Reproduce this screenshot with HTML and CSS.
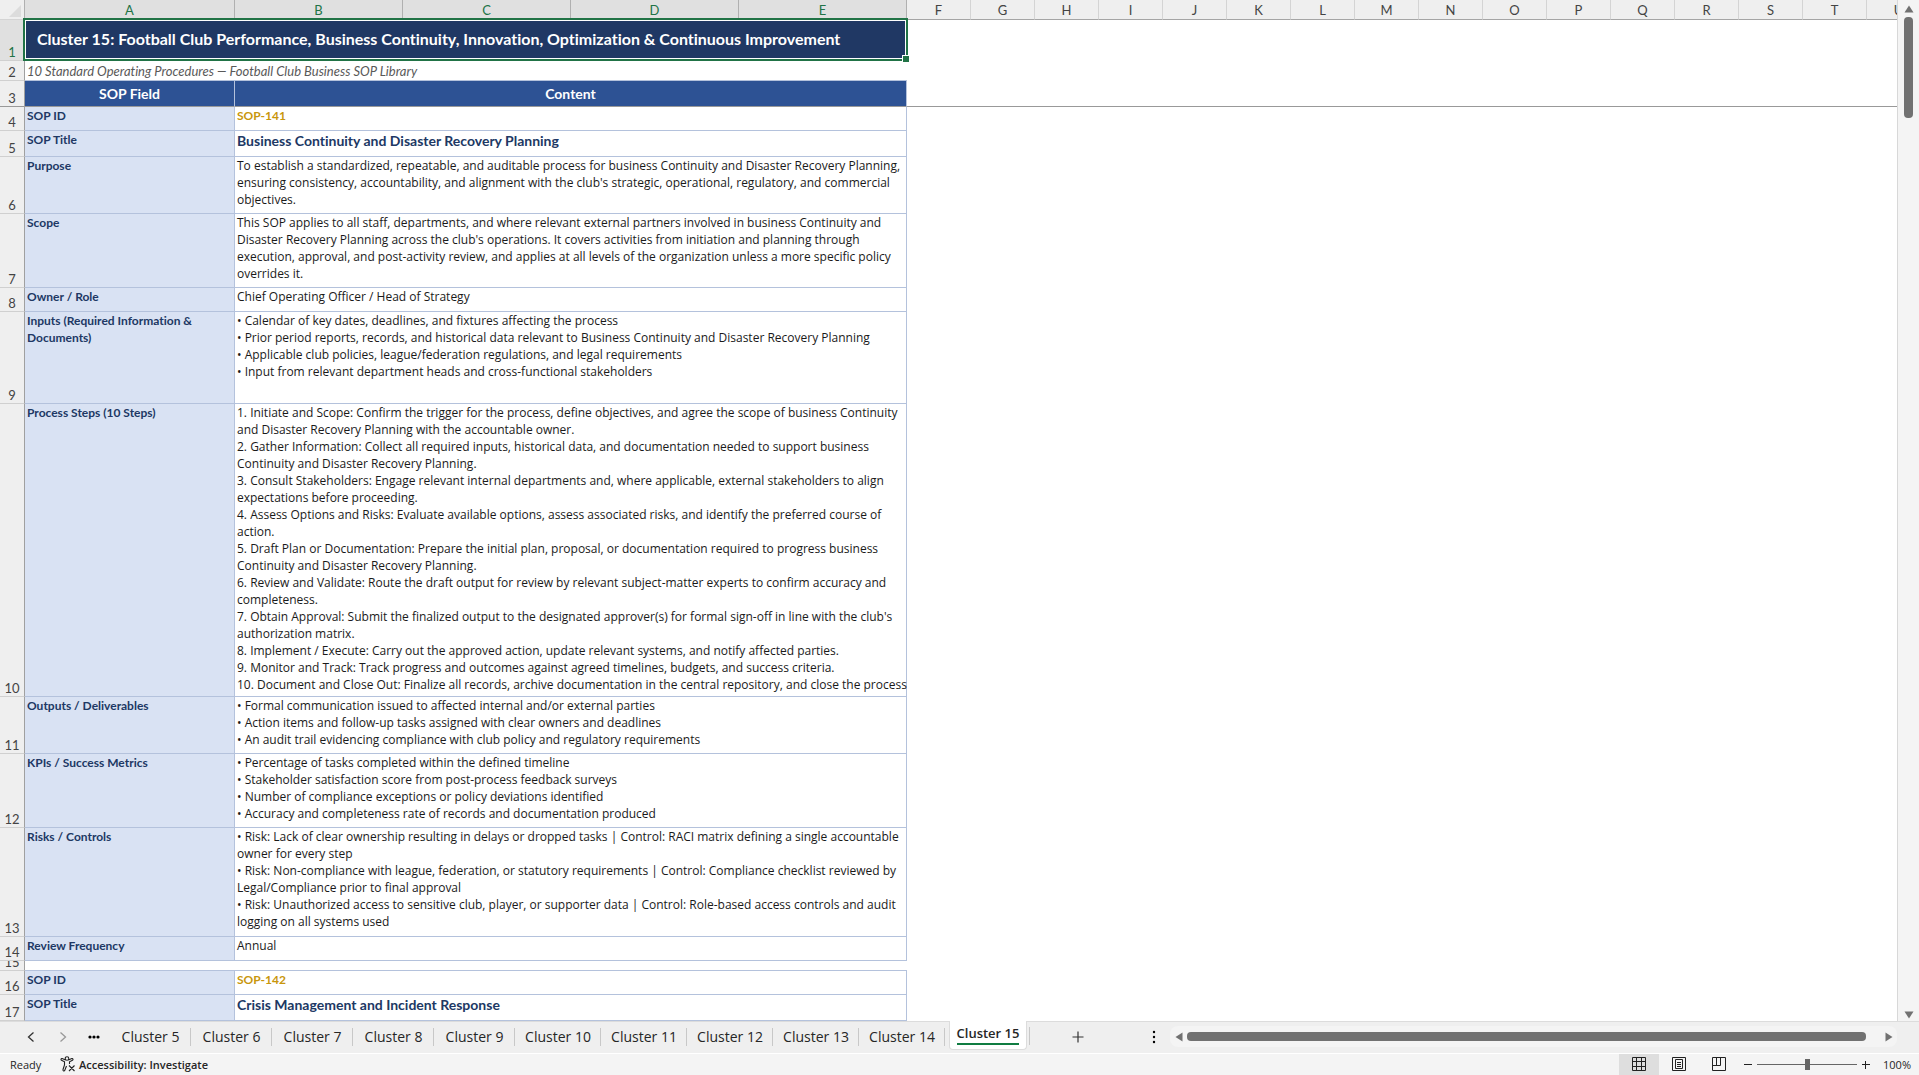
FILE: index.html
```html
<!DOCTYPE html>
<html lang="en">
<head>
<meta charset="UTF-8">
<meta name="viewport" content="width=device-width, initial-scale=1.0">
<title>Football Club SOP Library</title>
<link rel="stylesheet" href="styles.css">
</head>
<body>
<main class="workspace">
  <div class="sheet">
    <table class="grid">
      <colgroup>
        <col class="col-num"><col class="col-field"><col class="col-content" span="4"><col class="col-std" span="16">
      </colgroup>
      <thead>
        <tr class="letters">
          <th class="corner"><svg width="12" height="12" viewBox="0 0 12 12"><path d="M12 0v12H0z" fill="#dcdcdc"/></svg></th>
          <th class="on">A</th><th class="on">B</th><th class="on">C</th><th class="on">D</th><th class="on">E</th>
          <th>F</th><th>G</th><th>H</th><th>I</th><th>J</th><th>K</th><th>L</th><th>M</th>
          <th>N</th><th>O</th><th>P</th><th>Q</th><th>R</th><th>S</th><th>T</th><th>U</th>
        </tr>
      </thead>
      <tbody>
        <tr class="row-title">
          <th class="num on">1</th>
          <td class="title" colspan="5">Cluster 15: Football Club Performance, Business Continuity, Innovation, Optimization &amp; Continuous Improvement<span class="selection"></span></td>
          <td colspan="16"></td>
        </tr>
        <tr class="row-sub">
          <th class="num">2</th>
          <td class="subtitle" colspan="5">10 Standard Operating Procedures — Football Club Business SOP Library</td>
          <td colspan="16"></td>
        </tr>
        <tr class="row-head">
          <th class="num">3</th>
          <td class="head">SOP Field</td>
          <td class="head" colspan="4">Content</td>
          <td colspan="16"></td>
        </tr>
        <tr class="h24">
          <th class="num">4</th>
          <td class="field">SOP ID</td>
          <td class="content id" colspan="4">SOP-141</td>
        </tr>
        <tr class="h26">
          <th class="num">5</th>
          <td class="field">SOP Title</td>
          <td class="content name" colspan="4">Business Continuity and Disaster Recovery Planning</td>
        </tr>
        <tr class="h57">
          <th class="num">6</th>
          <td class="field">Purpose</td>
          <td class="content" colspan="4">To establish a standardized, repeatable, and auditable process for business Continuity and Disaster Recovery Planning,<br>
            ensuring consistency, accountability, and alignment with the club's strategic, operational, regulatory, and commercial<br>
            objectives.</td>
        </tr>
        <tr class="h74">
          <th class="num">7</th>
          <td class="field">Scope</td>
          <td class="content" colspan="4">This SOP applies to all staff, departments, and where relevant external partners involved in business Continuity and<br>
            Disaster Recovery Planning across the club's operations. It covers activities from initiation and planning through<br>
            execution, approval, and post-activity review, and applies at all levels of the organization unless a more specific policy<br>
            overrides it.</td>
        </tr>
        <tr class="h24">
          <th class="num">8</th>
          <td class="field">Owner / Role</td>
          <td class="content" colspan="4">Chief Operating Officer / Head of Strategy</td>
        </tr>
        <tr class="h92">
          <th class="num">9</th>
          <td class="field">Inputs (Required Information &amp;<br>Documents)</td>
          <td class="content" colspan="4">• Calendar of key dates, deadlines, and fixtures affecting the process<br>
            • Prior period reports, records, and historical data relevant to Business Continuity and Disaster Recovery Planning<br>
            • Applicable club policies, league/federation regulations, and legal requirements<br>
            • Input from relevant department heads and cross-functional stakeholders</td>
        </tr>
        <tr class="h293">
          <th class="num">10</th>
          <td class="field">Process Steps (10 Steps)</td>
          <td class="content" colspan="4">1. Initiate and Scope: Confirm the trigger for the process, define objectives, and agree the scope of business Continuity<br>
            and Disaster Recovery Planning with the accountable owner.<br>
            2. Gather Information: Collect all required inputs, historical data, and documentation needed to support business<br>
            Continuity and Disaster Recovery Planning.<br>
            3. Consult Stakeholders: Engage relevant internal departments and, where applicable, external stakeholders to align<br>
            expectations before proceeding.<br>
            4. Assess Options and Risks: Evaluate available options, assess associated risks, and identify the preferred course of<br>
            action.<br>
            5. Draft Plan or Documentation: Prepare the initial plan, proposal, or documentation required to progress business<br>
            Continuity and Disaster Recovery Planning.<br>
            6. Review and Validate: Route the draft output for review by relevant subject-matter experts to confirm accuracy and<br>
            completeness.<br>
            7. Obtain Approval: Submit the finalized output to the designated approver(s) for formal sign-off in line with the club's<br>
            authorization matrix.<br>
            8. Implement / Execute: Carry out the approved action, update relevant systems, and notify affected parties.<br>
            9. Monitor and Track: Track progress and outcomes against agreed timelines, budgets, and success criteria.<br>
            10. Document and Close Out: Finalize all records, archive documentation in the central repository, and close the process</td>
        </tr>
        <tr class="h57">
          <th class="num">11</th>
          <td class="field">Outputs / Deliverables</td>
          <td class="content" colspan="4">• Formal communication issued to affected internal and/or external parties<br>
            • Action items and follow-up tasks assigned with clear owners and deadlines<br>
            • An audit trail evidencing compliance with club policy and regulatory requirements</td>
        </tr>
        <tr class="h74">
          <th class="num">12</th>
          <td class="field">KPIs / Success Metrics</td>
          <td class="content" colspan="4">• Percentage of tasks completed within the defined timeline<br>
            • Stakeholder satisfaction score from post-process feedback surveys<br>
            • Number of compliance exceptions or policy deviations identified<br>
            • Accuracy and completeness rate of records and documentation produced</td>
        </tr>
        <tr class="h109">
          <th class="num">13</th>
          <td class="field">Risks / Controls</td>
          <td class="content" colspan="4">• Risk: Lack of clear ownership resulting in delays or dropped tasks | Control: RACI matrix defining a single accountable<br>
            owner for every step<br>
            • Risk: Non-compliance with league, federation, or statutory requirements | Control: Compliance checklist reviewed by<br>
            Legal/Compliance prior to final approval<br>
            • Risk: Unauthorized access to sensitive club, player, or supporter data | Control: Role-based access controls and audit<br>
            logging on all systems used</td>
        </tr>
        <tr class="h24">
          <th class="num">14</th>
          <td class="field">Review Frequency</td>
          <td class="content" colspan="4">Annual</td>
        </tr>
        <tr class="spacer">
          <th class="num"><div class="clip">15</div></th>
          <td class="gap" colspan="5"></td>
        </tr>
        <tr class="h24">
          <th class="num">16</th>
          <td class="field">SOP ID</td>
          <td class="content id" colspan="4">SOP-142</td>
        </tr>
        <tr class="h26">
          <th class="num">17</th>
          <td class="field">SOP Title</td>
          <td class="content name" colspan="4">Crisis Management and Incident Response</td>
        </tr>
      </tbody>
    </table>
  </div>
  <div class="vscroll">
    <button class="arrow" aria-label="Scroll up"><svg width="10" height="8" viewBox="0 0 10 8"><path d="M5 0.500L9.500 7.500H0.500z"/></svg></button>
    <div class="vtrack"><div class="vthumb"></div></div>
    <button class="arrow" aria-label="Scroll down"><svg width="10" height="8" viewBox="0 0 10 8"><path d="M5 7.500L0.500 0.500h9z"/></svg></button>
  </div>
</main>

<nav class="tabbar">
  <div class="tab-nav">
    <button aria-label="Previous sheet"><svg width="8" height="12" viewBox="0 0 8 12"><path d="M6.500 1.500L1.500 6L6.500 10.500" fill="none" stroke="#333" stroke-width="1.300"/></svg></button>
    <button aria-label="Next sheet"><svg width="8" height="12" viewBox="0 0 8 12"><path d="M1.500 1.500L6.500 6L1.500 10.500" fill="none" stroke="#999" stroke-width="1.300"/></svg></button>
    <button aria-label="More sheets"><svg width="12" height="4" viewBox="0 0 12 4"><circle cx="2" cy="2" r="1.600"/><circle cx="6" cy="2" r="1.600"/><circle cx="10" cy="2" r="1.600"/></svg></button>
  </div>
  <div class="tabs">
    <button class="tab">Cluster 5</button>
    <button class="tab">Cluster 6</button>
    <button class="tab">Cluster 7</button>
    <button class="tab">Cluster 8</button>
    <button class="tab">Cluster 9</button>
    <button class="tab wide">Cluster 10</button>
    <button class="tab wide">Cluster 11</button>
    <button class="tab wide">Cluster 12</button>
    <button class="tab wide">Cluster 13</button>
    <button class="tab wide">Cluster 14</button>
    <button class="tab active"><span>Cluster 15</span></button>
  </div>
  <button class="add" aria-label="New sheet"><svg width="12" height="12" viewBox="0 0 12 12"><path d="M6 0.500v11M0.500 6h11" stroke="#333" stroke-width="1.200"/></svg></button>
  <div class="hscroll-area">
    <span class="grip"><svg width="4" height="14" viewBox="0 0 4 14"><circle cx="2" cy="2" r="1.200"/><circle cx="2" cy="7" r="1.200"/><circle cx="2" cy="12" r="1.200"/></svg></span>
    <div class="hscroll">
      <button class="arrow" aria-label="Scroll left"><svg width="8" height="10" viewBox="0 0 8 10"><path d="M0.500 5l7-4.500v9z"/></svg></button>
      <div class="htrack"><div class="hthumb"></div></div>
      <button class="arrow" aria-label="Scroll right"><svg width="8" height="10" viewBox="0 0 8 10"><path d="M7.500 5l-7 4.500v-9z"/></svg></button>
    </div>
  </div>
</nav>

<footer class="statusbar">
  <span class="ready">Ready</span>
  <button class="access">
    <svg width="16" height="16" viewBox="0 0 16 16" fill="none" stroke="#222" stroke-width="1.100"><circle cx="7" cy="2.500" r="1.800"/><path d="M5.500 4L2.200 2.600C1 2.200 0.500 3.800 1.500 4.300L4.500 5.800V9L3 13.500C2.600 15 4.300 15.500 4.800 14.200L6.500 10M8.500 4l3.300-1.400c1.200-.4 1.700 1.200.7 1.700L9.500 5.800V8M9 9.500l5.500 5.500M14.500 9.500L9 15"/></svg>
    Accessibility: Investigate
  </button>
  <div class="views">
    <button class="view current" aria-label="Normal view"><svg width="14" height="14" viewBox="0 0 14 14"><path d="M.5 .5h13v13H.5zM4.500 .5v13M9.500 .5v13M.5 4.500h13M.5 9.500h13"/></svg></button>
    <button class="view" aria-label="Page layout"><svg width="14" height="14" viewBox="0 0 14 14"><path d="M.5 .5h13v13H.5zM3.500 2.500h7v9h-7zM5 5.500h4M5 7.500h4M5 9.500h4"/></svg></button>
    <button class="view" aria-label="Page break preview"><svg width="14" height="14" viewBox="0 0 14 14"><path d="M.5 .5h13v13H.5zM.5 8.500h8V.5M4.500 .5v8"/></svg></button>
  </div>
  <div class="zoom">
    <button aria-label="Zoom out"><svg width="8" height="8" viewBox="0 0 8 8"><path d="M0 3.500h8"/></svg></button>
    <input type="range" min="10" max="190" value="100" aria-label="Zoom">
    <button aria-label="Zoom in"><svg width="8" height="8" viewBox="0 0 8 8"><path d="M0 3.500h8M3.500 0v8"/></svg></button>
    <span class="percent">100%</span>
  </div>
</footer>
</body>
</html>
```
FILE: styles.css
```css
:root {
  --line: #b4c2dc;
  --navy: #203864;
  --green: #217346;
  --chrome: #efefef;
  --thumb: #717171;
}

* { box-sizing: border-box; }

body {
  margin: 0;
  height: 100vh;
  display: flex; flex-direction: column;
  font-family: Lato, "Liberation Sans", sans-serif;
  font-variant-ligatures: none;
  color: #1a1a1a; background: #fff;
  overflow: hidden;
}

button {
  margin: 0; padding: 0; border: none; background: none;
  font: inherit; color: inherit; cursor: pointer;
  display: flex; align-items: center; justify-content: center;
}

svg { display: block; }

.workspace {
  flex: 1; min-height: 0;
  display: flex;
}
.sheet {
  flex: 1; min-width: 0;
  overflow: hidden;
  border-right: 1px solid #d8d8d8;
}

/* grid */
.grid {
  table-layout: fixed; width: 1931px;
  border-collapse: separate; border-spacing: 0;
  font-size: 12px; line-height: 17px;
}
.col-num { width: 25px; }
.col-field { width: 210px; }
.col-content { width: 168px; }
.col-std { width: 64px; }

.grid th, .grid td { padding: 0; white-space: nowrap; }

.grid .letters th {
  height: 20px; padding-top: 2px;
  font-size: 13px; font-weight: 400; line-height: 17px;
  color: #444; background: var(--chrome);
  border-bottom: 1px solid #a5a5a5;
  border-right: 1px solid #d4d4d4;
}
.grid .letters .on {
  color: var(--green); background: #e0e0e0;
  border-right-color: #b0b0b0;
}
.grid .letters .corner { border-bottom-color: #d4d4d4; border-right-color: #b0b0b0; }
.corner svg { margin-left: 9px; }

.grid .num {
  font-size: 13px; font-weight: 400; line-height: 16px;
  color: #444; background: var(--chrome);
  vertical-align: bottom;
  border-right: 1px solid #a0a0a0;
  border-bottom: 1px solid #d0d0d0;
}
.grid .num.on { color: var(--green); background: #e0e0e0; }

.row-title { height: 41px; }
.row-sub { height: 20px; }
.row-head { height: 26px; }
.h24 { height: 24px; }
.h26 { height: 26px; }
.h57 { height: 57px; }
.h74 { height: 74px; }
.h92 { height: 92px; }
.h109 { height: 109px; }
.h293 { height: 293px; }
.spacer { height: 10px; }

.grid .title {
  position: relative;
  padding: 0 0 4px 12px;
  font-size: 16px; font-weight: 700;
  color: #fff; background: var(--navy);
}
.selection {
  position: absolute; top: -2px; left: -2px; right: -1px; bottom: 0;
  border: 2px solid var(--green);
  box-shadow: inset 0 0 0 1px #fff;
}
.selection::after {
  content: "";
  position: absolute; right: -3px; bottom: -3px;
  width: 6px; height: 6px;
  background: var(--green);
  border-top: 1px solid #fff; border-left: 1px solid #fff;
}

.grid .subtitle {
  padding: 2px 0 0 2px;
  font-size: 13px; font-style: italic; color: #595959;
  border-bottom: 1px solid var(--line);
}

.grid .head {
  text-align: center;
  font-size: 14px; font-weight: 700;
  color: #fff; background: #2d5294;
  border-right: 1px solid var(--line);
}
/* frozen pane edge */
.grid .row-head td, .grid .row-head .num { border-bottom: 1px solid #999; }

.grid .field, .grid .content {
  padding: 0 0 0 2px;
  vertical-align: top;
  border-right: 1px solid var(--line);
  border-bottom: 1px solid var(--line);
}
.grid .field {
  font-weight: 700;
  color: var(--navy); background: #d9e2f3;
}
.grid .content { font-family: "Open Sans", "Noto Sans", sans-serif; }
.grid .id, .grid .name { font-family: Lato, "Liberation Sans", sans-serif; font-weight: 700; }
.grid .id { color: #c8960c; }
.grid .name {
  padding-top: 1px;
  font-size: 14px; color: var(--navy);
}
.grid .gap { border-bottom: 1px solid var(--line); }
.clip {
  height: 9px; overflow: hidden;
  display: flex; align-items: flex-end; justify-content: center;
}

/* scrollbars */
.arrow svg { fill: var(--thumb); }
.vscroll {
  width: 21px; padding: 2px 2px 0 2px;
  display: flex; flex-direction: column; align-items: center;
  background: #f4f4f4;
}
.vscroll .arrow { width: 17px; height: 13px; }
.vtrack { flex: 1; padding-top: 2px; }
.vthumb { width: 9px; height: 101px; border-radius: 4px; background: var(--thumb); }

.hscroll-area {
  margin-left: auto; margin-right: 22px;
  display: flex; align-items: center; gap: 14px;
  padding-bottom: 2px;
}
.hscroll {
  width: 727px; height: 21px;
  display: flex; align-items: center;
  background: #f4f4f4; border-radius: 8px;
}
.hscroll .arrow { width: 17px; height: 21px; }
.htrack { flex: 1; padding-right: 14px; }
.hthumb { height: 9px; border-radius: 4px; background: var(--thumb); }

/* sheet tabs */
.tabbar {
  height: 33px;
  display: flex;
  font-family: "Open Sans", "Noto Sans", sans-serif;
  font-size: 14px; color: #262626;
  background: var(--chrome);
  border-top: 1px solid #dcdcdc;
  border-bottom: 1px solid #fff;
}
.tab-nav { display: flex; width: 110px; padding-left: 15px; }
.tab-nav button { width: 32px; padding-bottom: 2px; }
.tabs { display: flex; }
.tab { position: relative; width: 81px; padding-bottom: 2px; }
.tab.wide { width: 86px; }
.tab::after {
  content: "";
  position: absolute; right: 0; top: 6px;
  width: 1px; height: 18px;
  background: #c8c8c8;
}
.tab.active {
  width: 78px; height: 29px; margin: -1px 3px 0 4px;
  font-size: 13px; font-weight: 600;
  background: #fff;
  border: 1px solid #dcdcdc; border-top: none;
  border-radius: 0 0 4px 4px;
}
.tab.active::after { right: -4px; }
.tab.active span { line-height: 20px; border-bottom: 2px solid #107c41; }
.add { width: 96px; padding-bottom: 2px; }

/* status bar */
.statusbar {
  height: 21px; padding: 0 8px 0 10px;
  display: flex; align-items: center;
  font-family: "Open Sans", "Noto Sans", sans-serif;
  font-size: 11px; color: #262626;
  background: #f4f4f4;
}
.ready { width: 50px; }
.access { gap: 3px; font-weight: 600; padding-bottom: 1px; }
.views { margin-left: auto; display: flex; }
.view { width: 40px; height: 21px; padding-bottom: 1px; }
.view.current { background: #dedede; }
.view svg, .zoom svg { fill: none; stroke: #222; stroke-width: 1px; }
.zoom { display: flex; align-items: center; }
.zoom button { width: 18px; height: 21px; }
.zoom input {
  appearance: none;
  width: 100px; height: 14px; margin: 0;
  background: linear-gradient(#666, #666) center / 100% 1px no-repeat;
}
.zoom input::-webkit-slider-thumb {
  appearance: none;
  width: 5px; height: 11px;
  background: #666;
}
.percent { width: 36px; text-align: right; }
```
